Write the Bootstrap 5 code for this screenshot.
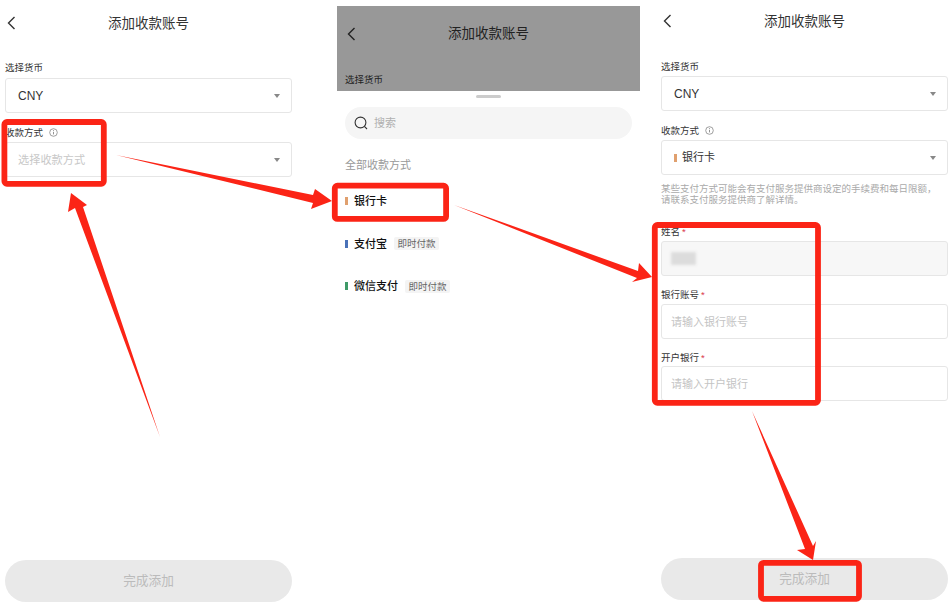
<!DOCTYPE html>
<html lang="zh-CN">
<head>
  <meta charset="UTF-8">
  <title>添加收款账号</title>
  <link href="https://cdn.jsdelivr.net/npm/bootstrap@5.3.0/dist/css/bootstrap.min.css" rel="stylesheet">
  <style>
    body {
      font-family: "Liberation Sans", "Noto Sans CJK SC", sans-serif;
      background: #fff;
      color: #222;
      height: 607px;
      overflow: hidden;
    }
    .guide-stage { position: relative; width: 951px; height: 607px; }
    .phone-a { width: 297px; height: 607px; padding: 0 5px; }
    .phone-b { width: 303px; height: 607px; margin: 0 16px 0 40px; padding-top: 6px; }
    .phone-c { width: 295px; height: 607px; padding: 0 3px 0 5px; }

    .top-title { font-size: 13.5px; color: #333; line-height: 20px; }
    .top-bar { position: relative; height: 46px; display: flex; align-items: center; justify-content: center; }
    .phone-a .top-bar { padding-top: 2px; }
    .phone-c .top-bar { height: 44px; }
    .back-arrow { position: absolute; left: 2px; top: 16px; }
    .phone-c .back-arrow { left: 2px; top: 14px; }

    .field-label { font-size: 9.5px; line-height: 14px; color: #333; height: 14px; padding-top: 1px; }
    .field-label .req { color: #d9394a; margin-left: 2px; }
    .pick-box, .text-box {
      height: 35px;
      border: 1px solid #e6e6e6;
      border-radius: 3px;
      padding: 0 12px;
      font-size: 12px;
      color: #333;
      background: #fff;
    }
    .text-box { font-size: 11px; box-shadow: none; }
    .text-box::placeholder { color: #c4c4c4; opacity: 1; }
    .pick-hint { font-size: 11.2px; color: #c8c8c8; padding-top: 2px; }
    .pick-caret { width: 0; height: 0; border-left: 3.5px solid transparent; border-right: 3.5px solid transparent; border-top: 4px solid #888; margin-right: -1px; }
    .pay-dot { width: 3px; height: 8px; flex: none; }
    .dot-bank { background: #e0a06e; }
    .dot-alipay { background: #4a72b8; }
    .dot-wechat { background: #3f9a68; }
    .locked-box { background: #f7f7f7; }
    .masked-name { width: 25px; height: 13px; background: #dcdcdc; filter: blur(1.5px); }
    .help-note { font-size: 9.5px; line-height: 11px; color: #aaa; margin: 8px 0 0; height: 22px; white-space: nowrap; }

    .done-btn {
      height: 42px;
      border: 0;
      border-radius: 21px;
      background: #e9e9e9;
      color: #bbb;
      font-size: 12.7px;
      padding-top: 2px;
      width: 100%;
    }

    .dim-head { height: 85px; background: #989898; overflow: hidden; padding: 0 8px; }
    .dim-head .top-bar { height: 54px; padding-top: 2px; }
    .dim-head .top-title { color: #222; }
    .dim-head .back-arrow { left: 2px; top: 21px; }
    .dim-head .field-label { margin-top: 12px; color: #222; }
    .sheet-body { padding: 0 8px; }
    .sheet-grip { width: 25px; height: 3px; border-radius: 2px; background: #ccc; margin: 4px auto 9px; }
    .find-box { height: 32px; border-radius: 16px; background: #f5f5f5; padding: 0 9px; gap: 6px; font-size: 11px; color: #b0b0b0; }
    .sheet-head { font-size: 11px; color: #999; line-height: 16px; margin: 18px 0 20px; }
    .pay-row { height: 16px; line-height: 16px; font-size: 11px; font-weight: 500; color: #111; margin-bottom: 26.5px; gap: 6px; }
    .pay-tag { font-size: 9.5px; font-weight: 400; line-height: 13px; padding: 0 3.5px; border-radius: 2px; background: #f4f4f4; color: #666; margin-left: 1px; }

    .mark-layer { position: absolute; left: 0; top: 0; pointer-events: none; }
  </style>
</head>
<body>
  <div class="guide-stage d-flex">

    <!-- step 1 -->
    <div class="phone-a d-flex flex-column">
      <div class="top-bar">
        <svg class="back-arrow" width="9" height="14" viewBox="0 0 9 14"><path d="M7.5 1 1.5 7l6 6" fill="none" stroke="#333" stroke-width="1.4"/></svg>
        <div class="top-title">添加收款账号</div>
      </div>
      <div class="field-label" style="margin-top:14px">选择货币</div>
      <div class="pick-box d-flex align-items-center justify-content-between mt-1">
        <span>CNY</span><span class="pick-caret"></span>
      </div>
      <div class="field-label d-flex align-items-center" style="margin-top:12px;gap:6px">收款方式
        <svg width="9" height="9" viewBox="0 0 9 9"><circle cx="4.5" cy="4.5" r="3.8" fill="none" stroke="#777" stroke-width=".7"/><path d="M4.5 3.8v2.6M4.5 2.2v.8" stroke="#777" stroke-width=".8"/></svg>
      </div>
      <div class="pick-box d-flex align-items-center justify-content-between" style="margin-top:3px">
        <span class="pick-hint">选择收款方式</span><span class="pick-caret"></span>
      </div>
      <div class="mt-auto" style="padding-bottom:5px">
        <button class="done-btn" type="button">完成添加</button>
      </div>
    </div>

    <!-- step 2 -->
    <div class="phone-b d-flex flex-column">
      <div class="dim-head">
        <div class="top-bar">
          <svg class="back-arrow" width="9" height="14" viewBox="0 0 9 14"><path d="M7.5 1 1.5 7l6 6" fill="none" stroke="#222" stroke-width="1.4"/></svg>
          <div class="top-title">添加收款账号</div>
        </div>
        <div class="field-label">选择货币</div>
      </div>
      <div class="sheet-body">
        <div class="sheet-grip"></div>
        <div class="find-box d-flex align-items-center">
          <svg width="14" height="14" viewBox="0 0 14 14"><circle cx="6.5" cy="6.5" r="5.4" fill="none" stroke="#333" stroke-width="1.1"/><path d="m10.4 10.4 2.6 2.6" stroke="#333" stroke-width="1.1"/></svg>
          <span>搜索</span>
        </div>
        <div class="sheet-head">全部收款方式</div>
        <div class="pay-row d-flex align-items-center"><span class="pay-dot dot-bank"></span><span>银行卡</span></div>
        <div class="pay-row d-flex align-items-center"><span class="pay-dot dot-alipay"></span><span>支付宝</span><span class="pay-tag">即时付款</span></div>
        <div class="pay-row d-flex align-items-center"><span class="pay-dot dot-wechat"></span><span>微信支付</span><span class="pay-tag">即时付款</span></div>
      </div>
    </div>

    <!-- step 3 -->
    <div class="phone-c d-flex flex-column">
      <div class="top-bar">
        <svg class="back-arrow" width="9" height="14" viewBox="0 0 9 14"><path d="M7.5 1 1.5 7l6 6" fill="none" stroke="#333" stroke-width="1.4"/></svg>
        <div class="top-title">添加收款账号</div>
      </div>
      <div class="field-label" style="margin-top:15px">选择货币</div>
      <div class="pick-box d-flex align-items-center justify-content-between" style="margin-top:3px">
        <span>CNY</span><span class="pick-caret"></span>
      </div>
      <div class="field-label d-flex align-items-center" style="margin-top:12px;gap:6px">收款方式
        <svg width="9" height="9" viewBox="0 0 9 9"><circle cx="4.5" cy="4.5" r="3.8" fill="none" stroke="#777" stroke-width=".7"/><path d="M4.5 3.8v2.6M4.5 2.2v.8" stroke="#777" stroke-width=".8"/></svg>
      </div>
      <div class="pick-box d-flex align-items-center justify-content-between" style="margin-top:3px">
        <span class="d-flex align-items-center" style="gap:5px;font-size:11px"><span class="pay-dot dot-bank"></span>银行卡</span><span class="pick-caret"></span>
      </div>
      <p class="help-note">某些支付方式可能会有支付服务提供商设定的手续费和每日限额，<br>请联系支付服务提供商了解详情。</p>
      <div class="field-label" style="margin-top:19px">姓名<span class="req">*</span></div>
      <div class="text-box locked-box d-flex align-items-center" style="margin-top:3px;padding-left:9px"><span class="masked-name"></span></div>
      <div class="field-label" style="margin-top:11px">银行账号<span class="req">*</span></div>
      <input class="form-control text-box" style="margin-top:3px;padding:0 9px" type="text" placeholder="请输入银行账号">
      <div class="field-label" style="margin-top:11px">开户银行<span class="req">*</span></div>
      <input class="form-control text-box" style="margin-top:2px;padding:0 9px" type="text" placeholder="请输入开户银行">
      <div class="mt-auto" style="padding-bottom:7px">
        <button class="done-btn" type="button">完成添加</button>
      </div>
    </div>

    <!-- red guide marks drawn over the screens -->
    <svg class="mark-layer" width="951" height="607" viewBox="0 0 951 607">
      <g fill="none" stroke="#fb2416" stroke-width="5.8">
        <rect x="4.4" y="122" width="99.4" height="61.8" rx="2.5"/>
        <rect x="334.8" y="185.7" width="111.3" height="33.2" rx="2.5"/>
        <rect x="654.8" y="225" width="163.2" height="177.8" rx="2.5"/>
        <rect x="761" y="562.8" width="98" height="36" rx="2.5"/>
      </g>
      <g fill="#fb2416">
        <polygon points="160,437 83,207 87,205 71,193 68,212 75,208"/>
        <polygon points="116,155 313,195 315,189 332,201 311,209 313,203"/>
        <polygon points="454,205 638,271 639,263 652,277 632,282 637,278"/>
        <polygon points="752,411 813,546 816,541 813,560 797,550 805,549"/>
      </g>
    </svg>
  </div>
  <script src="https://cdn.jsdelivr.net/npm/bootstrap@5.3.0/dist/js/bootstrap.bundle.min.js"></script>
</body>
</html>
